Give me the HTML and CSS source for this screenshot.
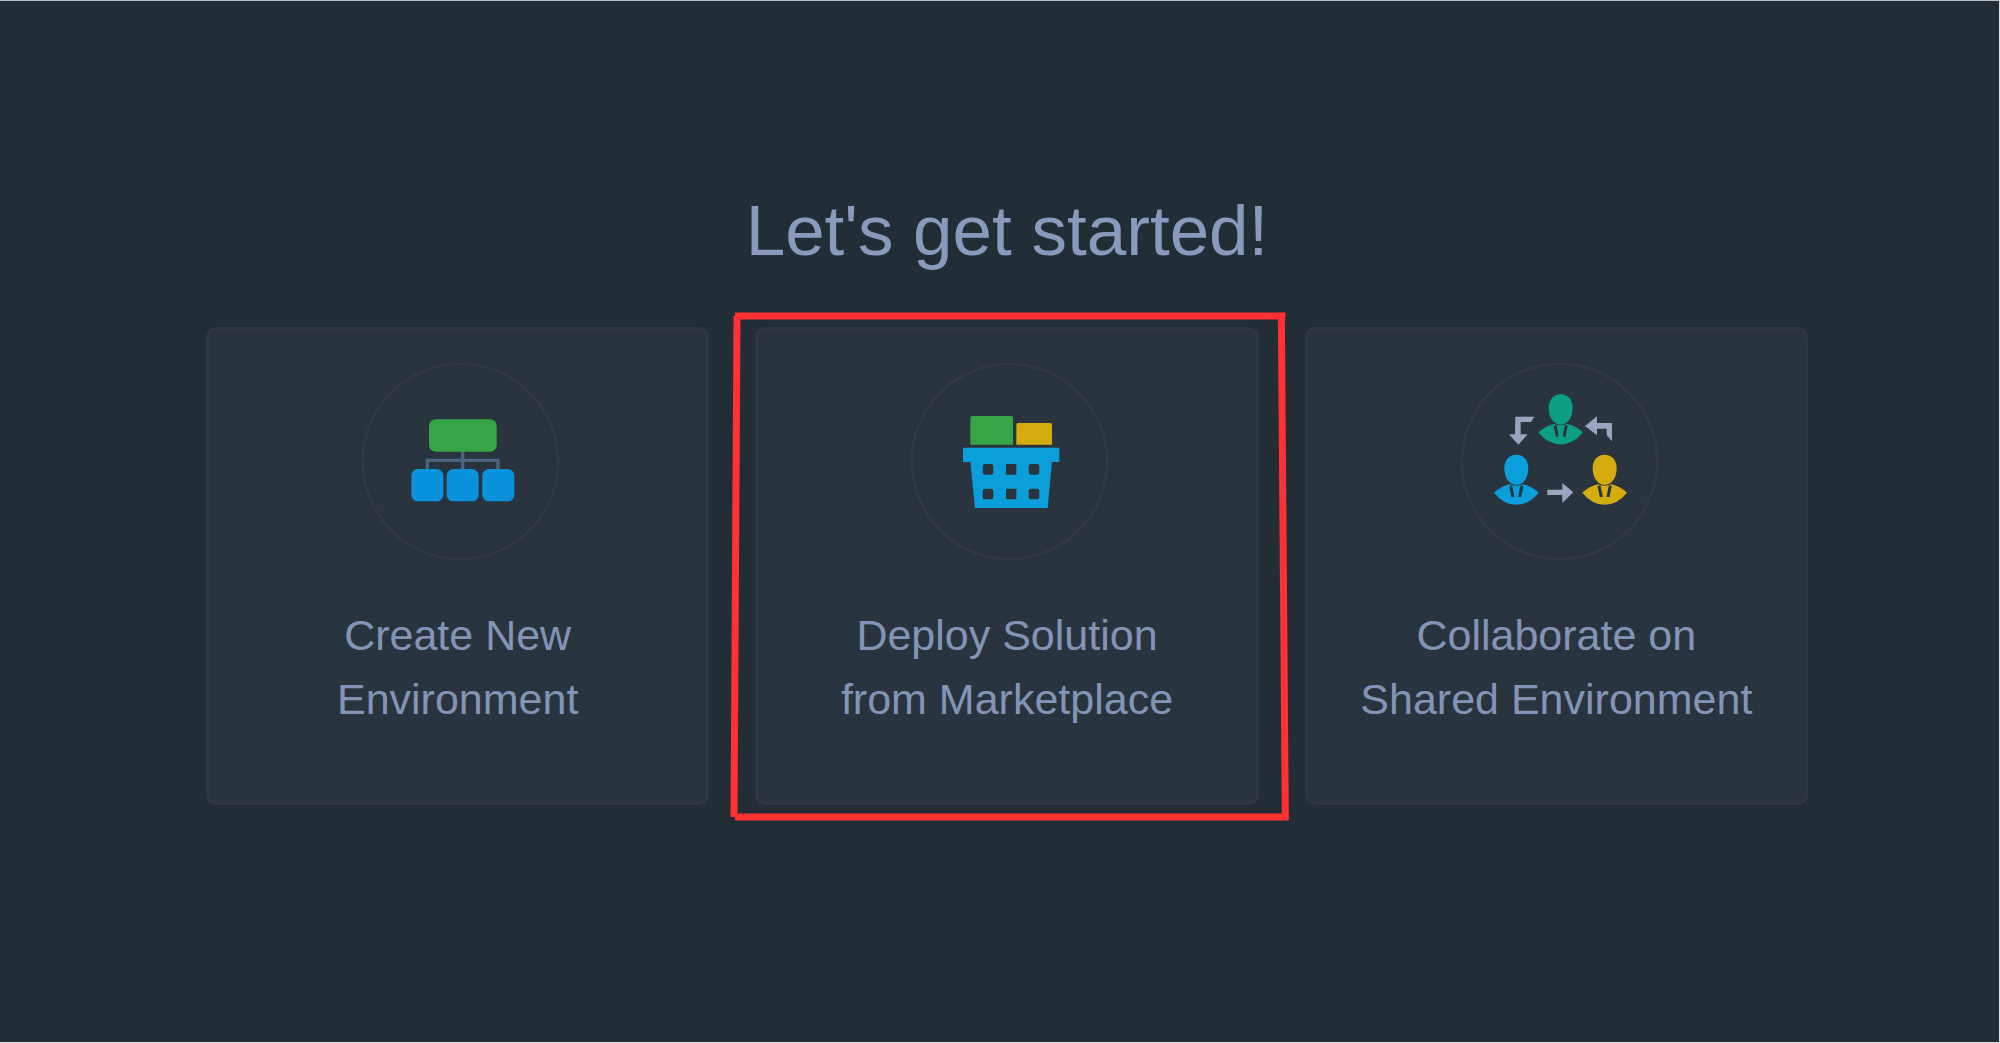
FILE: index.html
```html
<!DOCTYPE html>
<html lang="en">
<head>
    <meta charset="UTF-8">
    <title>Let's get started!</title>
    <link rel="stylesheet" href="styles.css">
</head>
<body>
<main class="welcome">
    <h1>Let's get started!</h1>

    <div class="cards">
        <!-- new environment -->
        <div class="slot">
            <button type="button" class="card">
                <svg class="icon" viewBox="63 63 597 597" aria-hidden="true">
                    <circle class="ring" cx="361.5" cy="361.5" r="293"/>
                    <path class="wires" d="M368 330v56M262 386v-28h212v28"/>
                    <rect class="green" x="267" y="235" width="203" height="97" rx="20"/>
                    <rect class="azure" x="214" y="384" width="96" height="97" rx="20"/>
                    <rect class="azure" x="320" y="384" width="96" height="97" rx="20"/>
                    <rect class="azure" x="427" y="384" width="96" height="97" rx="20"/>
                </svg>
                <span class="label">Create New<br>Environment</span>
            </button>
        </div>

        <!-- marketplace -->
        <div class="slot">
            <button type="button" class="card">
                <svg class="icon" viewBox="63 63 597 597" aria-hidden="true">
                    <circle class="ring" cx="361.5" cy="361.5" r="293"/>
                    <path class="green" d="M244 311v-80q0-6 6-6h116q6 0 6 6v80z"/>
                    <path class="yellow" d="M382 311v-59q0-6 6-6h95q6 0 6 6v59z"/>
                    <path class="blue" d="M222 320h289v43h-22l-13 138H258l-14-138h-22z"/>
                    <g class="hole">
                        <rect x="281" y="369" width="32" height="32" rx="8"/>
                        <rect x="351" y="369" width="31" height="32" rx="2"/>
                        <rect x="419" y="369" width="32" height="32" rx="8"/>
                        <rect x="281" y="443" width="32" height="32" rx="8"/>
                        <rect x="351" y="443" width="31" height="32" rx="2"/>
                        <rect x="419" y="443" width="32" height="32" rx="8"/>
                    </g>
                </svg>
                <span class="label">Deploy Solution<br>from Marketplace</span>
            </button>
            <svg class="marker" viewBox="0 0 570 520" preserveAspectRatio="none" aria-hidden="true">
                <path d="M10 9H560M12 9L9 511M10 511H563M556 6L560 514"/>
            </svg>
        </div>

        <!-- shared environment -->
        <div class="slot">
            <button type="button" class="card">
                <svg class="icon" viewBox="63 63 597 597" aria-hidden="true">
                    <defs>
                        <g id="person">
                            <path d="M0-75C22-75 36-58 36-34C36-4 20 16 0 16S-36-4-36-34C-36-58-22-75 0-75z"/>
                            <path d="M-20 14Q0 22 20 14Q46 20 67 39Q38 75 0 75T-67 39Q-46 20-20 14z"/>
                            <path class="lapel" d="M-17 18L-10 52M17 18L10 52"/>
                        </g>
                    </defs>
                    <circle class="ring" cx="361.5" cy="361.5" r="293"/>
                    <use class="teal" href="#person" x="365" y="235"/>
                    <use class="blue" href="#person" x="232" y="416"/>
                    <use class="yellow" href="#person" x="497" y="416"/>
                    <path class="arrow" d="M229 227h57l-10 16h-31v37h21l-28 31-28-31h18z"/>
                    <path class="arrow" d="M438 255l36-29v20h45v55l-16-18v-20h-29v20z"/>
                    <path class="arrow" d="M325 446h45v-20l33 28-33 32v-24h-45z"/>
                </svg>
                <span class="label">Collaborate on<br>Shared Environment</span>
            </button>
        </div>
    </div>
</main>
</body>
</html>
```

FILE: styles.css
```css
* {
    box-sizing: border-box;
}
body {
    margin: 0;
    min-height: 100vh;
    background-color: #232d36;
    border-top: 1px solid #bcc2c5;
    border-right: 1px solid #dfe2e4;
    border-bottom: 1px solid #dfe2e4;
    color: #8a9abf;
    font-family: "Liberation Sans", Arial, sans-serif;
}
.welcome {
    padding: 189px 191px 60px 206px;
}
h1 {
    margin: 0 0 55px;
    font-size: 71px;
    font-weight: normal;
    line-height: 82px;
    text-align: center;
}
.cards {
    display: grid;
    grid-template-columns: repeat(3, 1fr);
    gap: 46px;
}
.slot {
    position: relative;
}
.card {
    display: flex;
    flex-direction: column;
    align-items: center;
    width: 100%;
    padding: 32px 24px 71px;
    background-color: #2a343f;
    border: 3px solid #303644;
    border-radius: 10px;
    color: #8394b8;
    font: inherit;
    cursor: pointer;
}
.card:hover {
    border-color: #46506a;
}
.icon {
    width: 199px;
    height: 199px;
    margin: 0 0 42px 6px;
}
.label {
    font-size: 43px;
    line-height: 64px;
    text-align: center;
}

/* hand drawn box around the marketplace card */
.marker {
    position: absolute;
    top: -20px;
    left: -30px;
    width: calc(100% + 67px);
    height: calc(100% + 41px);
    pointer-events: none;
}
.marker path {
    fill: none;
    stroke: #ff3131;
    stroke-width: 7px;
}

.ring {
    fill: none;
    stroke: #333949;
    stroke-width: 8px;
}
.wires {
    fill: none;
    stroke: #4a6482;
    stroke-width: 10px;
}
.green {
    fill: #36a546;
}
.azure {
    fill: #0a93dc;
}
.blue {
    fill: #0a9fdb;
}
.yellow {
    fill: #d4ac0d;
}
.teal {
    fill: #0c9f83;
}
.hole {
    fill: #2a343f;
}
.lapel {
    fill: none;
    stroke: #2a343f;
    stroke-width: 9px;
}
.arrow {
    fill: #9aa3bf;
}
```
